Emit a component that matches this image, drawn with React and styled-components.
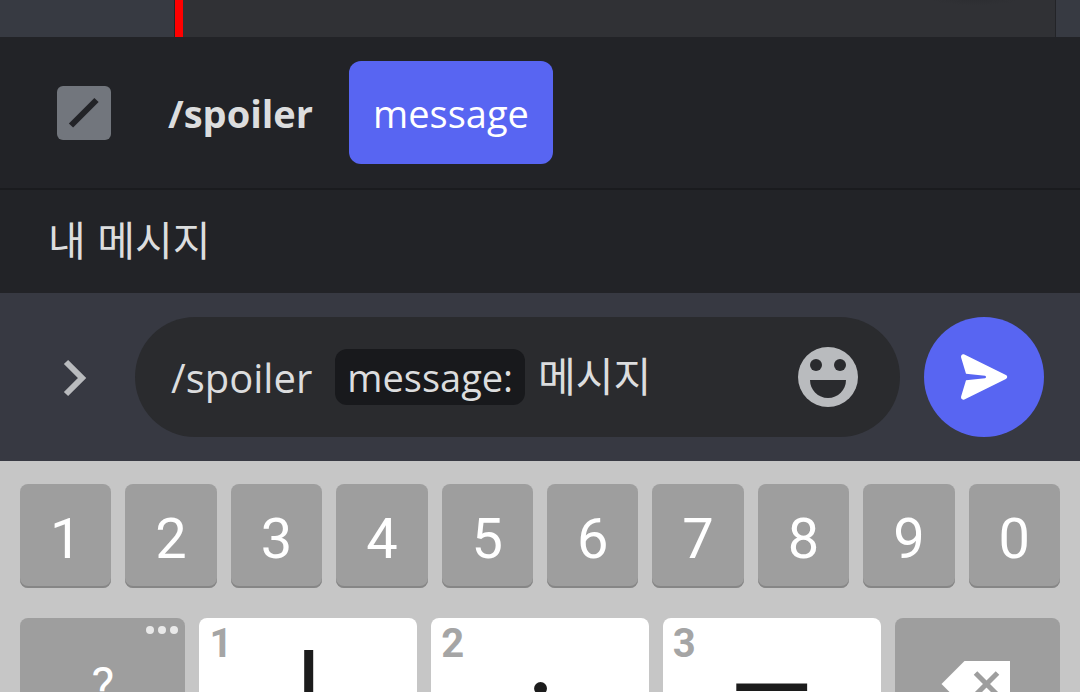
import React from 'react';
import styled, { createGlobalStyle } from 'styled-components';

const GlobalStyle = createGlobalStyle`
  * { box-sizing: border-box; }
  body { margin: 0; background: #c6c6c6; }
  button, input {
    font: inherit;
    color: inherit;
    border: 0;
    margin: 0;
    padding: 0;
    background: none;
  }
`;

const Screen = styled.main`
  display: flex;
  flex-direction: column;
  height: 100vh;
  overflow: hidden;
  font-family: 'Open Sans', 'Noto Sans CJK KR', sans-serif;
  font-size: 38px;
  color: #dcddde;
`;

const ChatEdge = styled.div`
  flex: none;
  display: flex;
  height: 37px;
  padding: 0 24px 0 174px;
  background: #373a42;
`;

const Embed = styled.div`
  flex: 1;
  border: solid #232428;
  border-width: 0 1px;
  background: radial-gradient(ellipse 44px 5px at 800px 0, #2d2e32, #303135);
`;

const EmbedAccent = styled.div`
  width: 8px;
  height: 100%;
  background: #ff0000;
`;

const CommandBar = styled.section`
  flex: none;
  display: flex;
  align-items: center;
  height: 153px;
  padding-left: 57px;
  background: #222327;
  border-bottom: 2px solid #1a1b1e;
`;

const CommandName = styled.strong`
  margin: 0 36px 0 57px;
  font-weight: 700;
`;

const OptionButton = styled.button`
  height: 103px;
  padding: 0 24px;
  border-radius: 12px;
  background: #5865f2;
  color: #fff;
`;

const Description = styled.p`
  flex: none;
  height: 103px;
  margin: 0;
  padding: 18px 0 0 48px;
  background: #222327;
  font-family: 'Noto Sans CJK KR', sans-serif;
  font-size: 41px;
  line-height: 60px;
`;

const Composer = styled.form`
  flex: none;
  display: flex;
  align-items: center;
  gap: 24px;
  padding: 24px 36px 24px 0;
  background: #373942;
`;

const ExpandButton = styled.button`
  display: flex;
  justify-content: center;
  width: 111px;
  padding-left: 39px;
`;

const Field = styled.div`
  flex: 1;
  min-width: 0;
  display: flex;
  align-items: center;
  height: 120px;
  padding: 0 42px 0 36px;
  border-radius: 60px;
  background: #2a2b2e;
`;

const TypedCommand = styled.span`
  margin-right: 23px;
  font-size: 40px;
`;

const OptionLabel = styled.label`
  height: 56px;
  padding: 0 12px;
  border-radius: 12px;
  background: #18191c;
  line-height: 56px;
`;

const ValueInput = styled.input`
  flex: 1;
  min-width: 0;
  height: 66px;
  padding: 0 0 6px 13px;
  outline: none;
  font-family: 'Noto Sans CJK KR', sans-serif;
  font-size: 41px;
`;

const IconButton = styled.button`
  display: flex;
`;

const SendButton = styled.button`
  display: flex;
  align-items: center;
  justify-content: center;
  width: 120px;
  height: 120px;
  border-radius: 50%;
  background: #5865f2;
`;

const Keyboard = styled.section`
  flex: 1;
  min-height: 0;
  overflow: hidden;
  padding: 23px 20px 0;
  background: #c6c6c6;
  font-family: Roboto, 'Noto Sans CJK KR', sans-serif;
`;

const KeyRow = styled.div`
  display: grid;
  grid-template-columns: ${(p) => p.$columns};
  gap: 14px;
  margin-bottom: 30px;
`;

const Key = styled.button`
  position: relative;
  display: flex;
  align-items: center;
  justify-content: center;
  height: ${(p) => (p.$tall ? 132 : 104)}px;
  padding-top: ${(p) => (p.$tall ? 0 : 6)}px;
  border-radius: 8px;
  background: ${(p) => (p.$light ? '#fff' : '#9e9e9e')};
  box-shadow: inset 0 -2px #868686;
  color: ${(p) => (p.$light ? '#1c1c1c' : '#fff')};
  font-size: ${(p) => (p.$tall ? 48 : 56)}px;
`;

const Jamo = styled.span`
  font-family: 'Noto Sans CJK KR', sans-serif;
  font-size: 86px;
  font-weight: 500;
  line-height: 96px;
`;

const KeyHint = styled.span`
  position: absolute;
  top: 2px;
  left: 10px;
  color: #a5a5a5;
  font-size: 40px;
  font-weight: 700;
  line-height: 48px;
`;

const MoreDots = styled.svg`
  position: absolute;
  top: 6px;
  right: 7px;
`;

const SlashIcon = () => (
  <svg width="54" height="54" viewBox="0 0 54 54" aria-hidden="true">
    <rect width="54" height="54" rx="6" fill="#72767d" />
    <path d="M14 39.5 39.5 14" stroke="#222327" strokeWidth="6" />
  </svg>
);

const ChevronIcon = () => (
  <svg width="24" height="40" viewBox="0 0 24 40" fill="none" aria-hidden="true">
    <path d="M3 5 19 21 3 37" stroke="#b9bbbe" strokeWidth="6" />
  </svg>
);

const SmileIcon = () => (
  <svg width="60" height="60" viewBox="0 0 60 60" aria-hidden="true">
    <circle cx="30" cy="30" r="30" fill="#b9bbbe" />
    <g fill="#2a2b2e">
      <circle cx="18" cy="18" r="6" />
      <circle cx="42" cy="18" r="6" />
      <path d="M12 33H48C48 43 40 51 30 51S12 43 12 33Z" />
    </g>
  </svg>
);

const SendIcon = () => (
  <svg width="48" height="48" viewBox="0 0 48 48" aria-hidden="true">
    <path
      fill="#fff"
      d="M1.1 4.4C.6 2.2 2.4.6 4.4 1.6L45.9 22.1C47.7 23 47.7 25 45.9 25.9L4.4 46.4C2.4 47.4.6 45.8 1.1 43.6L6 27.2 25 25.2C26.4 25 26.4 23 25 22.8L6 20.8Z"
    />
  </svg>
);

const BackspaceIcon = () => (
  <svg width="72" height="46" viewBox="0 0 72 46" aria-hidden="true">
    <path d="M23.5 0H69V46H23.5L.5 23Z" fill="#fff" />
    <path d="M34.5 12 56.5 34M56.5 12 34.5 34" stroke="#9e9e9e" strokeWidth="5" />
  </svg>
);

const digits = ['1', '2', '3', '4', '5', '6', '7', '8', '9', '0'];
const vowels = [
  { hint: '1', jamo: 'ㅣ' },
  { hint: '2', jamo: 'ㆍ' },
  { hint: '3', jamo: 'ㅡ' },
];

export default function App() {
  return (
    <>
      <GlobalStyle />
      <Screen lang="ko">
        <ChatEdge>
          <Embed>
            <EmbedAccent />
          </Embed>
        </ChatEdge>
        <CommandBar>
          <SlashIcon />
          <CommandName>/spoiler</CommandName>
          <OptionButton type="button">message</OptionButton>
        </CommandBar>
        <Description>내 메시지</Description>
        <Composer onSubmit={(e) => e.preventDefault()}>
          <ExpandButton type="button" aria-label="펼치기">
            <ChevronIcon />
          </ExpandButton>
          <Field>
            <TypedCommand>/spoiler</TypedCommand>
            <OptionLabel htmlFor="message">message:</OptionLabel>
            <ValueInput id="message" type="text" defaultValue="메시지" autoComplete="off" />
            <IconButton type="button" aria-label="이모지">
              <SmileIcon />
            </IconButton>
          </Field>
          <SendButton type="submit" aria-label="보내기">
            <SendIcon />
          </SendButton>
        </Composer>
        <Keyboard>
          <KeyRow $columns="repeat(10, 1fr)">
            {digits.map((d) => (
              <Key type="button" key={d}>{d}</Key>
            ))}
          </KeyRow>
          <KeyRow $columns="38fr 50fr 50fr 50fr 38fr">
            <Key type="button" $tall>
              ?
              <MoreDots width="32" height="12" viewBox="0 0 32 12" fill="#e9e9e9" aria-hidden="true">
                <circle cx="4" cy="6" r="4" />
                <circle cx="16" cy="6" r="4" />
                <circle cx="28" cy="6" r="4" />
              </MoreDots>
            </Key>
            {vowels.map((v) => (
              <Key type="button" $tall $light key={v.hint}>
                <KeyHint>{v.hint}</KeyHint>
                <Jamo>{v.jamo}</Jamo>
              </Key>
            ))}
            <Key type="button" $tall aria-label="지우기">
              <BackspaceIcon />
            </Key>
          </KeyRow>
        </Keyboard>
      </Screen>
    </>
  );
}
